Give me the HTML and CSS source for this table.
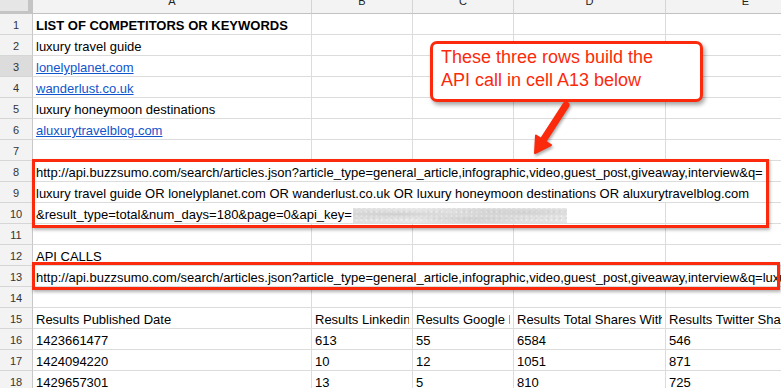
FILE: index.html
```html
<!DOCTYPE html>
<html>
<head>
<meta charset="utf-8">
<link rel="stylesheet" href="styles.css">
</head>
<body>
<div class="page">
  <div class="sheet">
    <div class="corner"></div>
    <div class="ch">A</div><div class="ch">B</div><div class="ch">C</div><div class="ch">D</div><div class="ch">E</div>

    <div class="rn">1</div><div class="c b">LIST OF COMPETITORS OR KEYWORDS</div><div class="c"></div><div class="c"></div><div class="c"></div><div class="c"></div>
    <div class="rn">2</div><div class="c">luxury travel guide</div><div class="c"></div><div class="c"></div><div class="c"></div><div class="c"></div>
    <div class="rn sel">3</div><div class="c"><span class="lnk">lonelyplanet.com</span></div><div class="c"></div><div class="c"></div><div class="c"></div><div class="c"></div>
    <div class="rn">4</div><div class="c"><span class="lnk">wanderlust.co.uk</span></div><div class="c"></div><div class="c"></div><div class="c"></div><div class="c"></div>
    <div class="rn">5</div><div class="c">luxury honeymoon destinations</div><div class="c"></div><div class="c"></div><div class="c"></div><div class="c"></div>
    <div class="rn">6</div><div class="c"><span class="lnk">aluxurytravelblog.com</span></div><div class="c"></div><div class="c"></div><div class="c"></div><div class="c"></div>
    <div class="rn">7</div><div class="c"></div><div class="c"></div><div class="c"></div><div class="c"></div><div class="c"></div>
    <div class="rn">8</div><div class="c span5">http://api.buzzsumo.com/search/articles.json?article_type=general_article,infographic,video,guest_post,giveaway,interview&amp;q=</div>
    <div class="rn">9</div><div class="c span5">luxury travel guide OR lonelyplanet.com OR wanderlust.co.uk OR luxury honeymoon destinations OR aluxurytravelblog.com</div>
    <div class="rn">10</div><div class="c span4">&amp;result_type=total&amp;num_days=180&amp;page=0&amp;api_key=<span class="blur"></span></div><div class="c"></div>
    <div class="rn">11</div><div class="c"></div><div class="c"></div><div class="c"></div><div class="c"></div><div class="c"></div>
    <div class="rn">12</div><div class="c">API CALLS</div><div class="c"></div><div class="c"></div><div class="c"></div><div class="c"></div>
    <div class="rn">13</div><div class="c span5"><span class="t">http://api.buzzsumo.com/search/articles.json?article_type=general_article,infographic,video,guest_post,giveaway,interview&amp;q=luxury travel guide OR lonelyplanet.com</span></div>
    <div class="rn">14</div><div class="c"></div><div class="c"></div><div class="c"></div><div class="c"></div><div class="c"></div>
    <div class="rn">15</div><div class="c"><span class="t">Results Published Date</span></div><div class="c"><span class="t">Results Linkedin Shares</span></div><div class="c"><span class="t">Results Google Plus Shares</span></div><div class="c"><span class="t">Results Total Shares Without Twitter</span></div><div class="c"><span class="t">Results Twitter Shares</span></div>
    <div class="rn">16</div><div class="c">1423661477</div><div class="c">613</div><div class="c">55</div><div class="c">6584</div><div class="c">546</div>
    <div class="rn">17</div><div class="c">1424094220</div><div class="c">10</div><div class="c">12</div><div class="c">1051</div><div class="c">871</div>
    <div class="rn">18</div><div class="c">1429657301</div><div class="c">13</div><div class="c">5</div><div class="c">810</div><div class="c">725</div>
  </div>

  <div class="callout">These three rows build the<br>API call in cell A13 below</div>
  <div class="hl hl1"></div>
  <div class="hl hl2"></div>
  <svg class="arrow" width="781" height="388" viewBox="0 0 781 388">
    <line x1="566" y1="105" x2="544" y2="139" stroke="#fb2a0c" stroke-width="7" stroke-linecap="round"/>
    <polygon points="535,153 536,135.5 551,145" fill="#fb2a0c" stroke="#fb2a0c" stroke-width="2" stroke-linejoin="round"/>
  </svg>
</div>
</body>
</html>
```

FILE: styles.css
```css
html, body {
  margin: 0;
  padding: 0;
  background: #ffffff;
  overflow: hidden;
}

.page {
  position: relative;
  width: 781px;
  height: 388px;
  overflow: hidden;
  font-family: Arial, "Liberation Sans", sans-serif;
}

.sheet {
  display: grid;
  grid-template-columns: 33px 279px 101px 101px 152px 160px;
  grid-template-rows: 14px;
  grid-auto-rows: 21px;
  width: 826px;
}

.corner {
  box-sizing: border-box;
  background: #e6e6e6;
  border-right: 5px solid #c4c4c4;
  border-bottom: 3px solid #c4c4c4;
}

.ch {
  box-sizing: border-box;
  background: #f3f3f3;
  border-right: 1px solid #d4d4d4;
  border-bottom: 1px solid #c2c2c2;
  display: flex;
  align-items: flex-end;
  justify-content: center;
  padding-bottom: 6px;
  overflow: hidden;
  font-size: 11px;
  line-height: 11px;
  color: #222;
}

.rn {
  box-sizing: border-box;
  background: #f3f3f3;
  border-right: 1px solid #c8c8c8;
  border-bottom: 1px solid #d6d6d6;
  display: flex;
  align-items: center;
  justify-content: center;
  font-size: 11px;
  color: #333;
  padding-top: 1px;
}

.rn.sel {
  background: #dcdcdc;
}

.c {
  box-sizing: border-box;
  border-right: 1px solid #dcdcdc;
  border-bottom: 1px solid #dcdcdc;
  display: flex;
  align-items: flex-end;
  padding: 0 3px 1px 3px;
  font-size: 13px;
  line-height: 15px;
  color: #000;
  white-space: nowrap;
  overflow: hidden;
}

.t {
  display: block;
  min-width: 0;
  overflow: hidden;
  white-space: nowrap;
}

.c.b {
  font-weight: bold;
}

.span5 {
  grid-column: span 5;
}

.span4 {
  grid-column: span 4;
}

.lnk {
  color: #1155cc;
  text-decoration: underline;
}

.blur {
  display: inline-block;
  width: 214px;
  height: 16px;
  margin-left: 1px;
  margin-bottom: -2px;
  background:
    radial-gradient(ellipse at 20% 40%, rgba(190,190,190,.55), transparent 30%),
    radial-gradient(ellipse at 55% 70%, rgba(200,200,200,.5), transparent 35%),
    radial-gradient(ellipse at 80% 30%, rgba(195,195,195,.5), transparent 30%),
    radial-gradient(circle at 50% 50%, rgba(255,255,255,.45) 0.6px, transparent 1.4px) 1px 2px / 5px 4px,
    radial-gradient(circle at 50% 50%, rgba(170,170,170,.18) 0.8px, transparent 1.6px) 0 0 / 6px 7px,
    linear-gradient(90deg, #dedede, #e6e6e6 30%, #dadada 60%, #e4e4e4);
}

.callout {
  position: absolute;
  left: 430px;
  top: 41px;
  width: 273px;
  height: 61px;
  box-sizing: border-box;
  background: #ffffff;
  border: 3.5px solid #fb2a0c;
  border-radius: 7px;
  box-shadow: 2px 3px 4px rgba(0,0,0,.35);
  padding: 2px 0 0 8px;
  color: #fb2a0c;
  font-family: "Liberation Sans", Arial, sans-serif;
  font-size: 18px;
  line-height: 23px;
  white-space: nowrap;
}

.hl {
  position: absolute;
  box-sizing: border-box;
  border: 3px solid #fb2a0c;
  box-shadow: 1px 2px 3px rgba(0,0,0,.3);
}

.hl1 {
  left: 32px;
  top: 159px;
  width: 737px;
  height: 69px;
}

.hl2 {
  left: 32px;
  top: 262px;
  width: 748px;
  height: 28px;
}

.arrow {
  position: absolute;
  left: 0;
  top: 0;
  pointer-events: none;
  filter: drop-shadow(1px 2px 1.5px rgba(0,0,0,.35));
}
```
